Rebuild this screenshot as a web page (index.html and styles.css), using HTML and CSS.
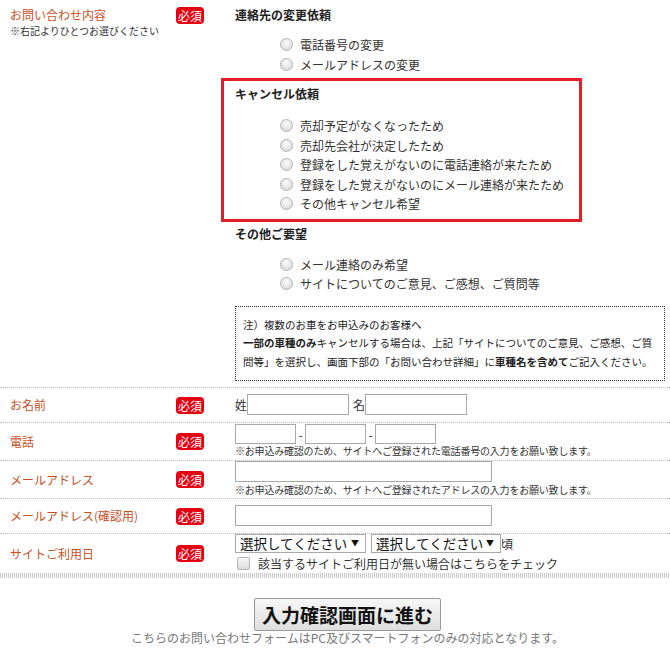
FILE: index.html
```html
<!DOCTYPE html>
<html lang="ja">
<head>
    <meta charset="UTF-8">
    <meta name="viewport" content="width=device-width, initial-scale=1.0">
    <title>お問い合わせ</title>
    <link rel="stylesheet" href="styles.css">
</head>
<body>
    <form class="contact-form">
        <div class="form-row">
            <div class="form-label form-label-top">
                <div class="label-text">お問い合わせ内容<small>※右記よりひとつお選びください</small></div>
                <span class="required">必須</span>
            </div>
            <div class="form-field field-inquiry">
                <p class="group-title">連絡先の変更依頼</p>
                <ul class="option-list">
                    <li><label><input type="radio" name="inquiry">電話番号の変更</label></li>
                    <li><label><input type="radio" name="inquiry">メールアドレスの変更</label></li>
                </ul>

                <div class="cancel-box">
                    <p class="group-title">キャンセル依頼</p>
                    <ul class="option-list cancel-list">
                        <li><label><input type="radio" name="inquiry">売却予定がなくなったため</label></li>
                        <li><label><input type="radio" name="inquiry">売却先会社が決定したため</label></li>
                        <li><label><input type="radio" name="inquiry">登録をした覚えがないのに電話連絡が来たため</label></li>
                        <li><label><input type="radio" name="inquiry">登録をした覚えがないのにメール連絡が来たため</label></li>
                        <li><label><input type="radio" name="inquiry">その他キャンセル希望</label></li>
                    </ul>
                </div>

                <p class="group-title other-title">その他ご要望</p>
                <ul class="option-list other-list">
                    <li><label><input type="radio" name="inquiry">メール連絡のみ希望</label></li>
                    <li><label><input type="radio" name="inquiry">サイトについてのご意見、ご感想、ご質問等</label></li>
                </ul>

                <div class="notice">
                    <p>注）複数のお車をお申込みのお客様へ</p>
                    <p><b>一部の車種のみ</b>キャンセルする場合は、上記「サイトについてのご意見、ご感想、ご質問等」を選択し、画面下部の「お問い合わせ詳細」に<b>車種名を含めて</b>ご記入ください。</p>
                </div>
            </div>
        </div>

        <div class="form-row">
            <div class="form-label">
                <div class="label-text">お名前</div>
                <span class="required">必須</span>
            </div>
            <div class="form-field field-name">
                <span>姓</span><input type="text" class="input-name">
                <span class="name-gap">名</span><input type="text" class="input-name">
            </div>
        </div>

        <div class="form-row">
            <div class="form-label">
                <div class="label-text">電話</div>
                <span class="required">必須</span>
            </div>
            <div class="form-field field-tel">
                <div>
                    <input type="text" class="input-tel"><span class="dash">-</span><input type="text" class="input-tel"><span class="dash">-</span><input type="text" class="input-tel">
                </div>
                <p class="field-note">※お申込み確認のため、サイトへご登録された電話番号の入力をお願い致します。</p>
            </div>
        </div>

        <div class="form-row">
            <div class="form-label">
                <div class="label-text">メールアドレス</div>
                <span class="required">必須</span>
            </div>
            <div class="form-field field-mail">
                <input type="text" class="input-mail">
                <p class="field-note">※お申込み確認のため、サイトへご登録されたアドレスの入力をお願い致します。</p>
            </div>
        </div>

        <div class="form-row">
            <div class="form-label">
                <div class="label-text">メールアドレス(確認用)</div>
                <span class="required">必須</span>
            </div>
            <div class="form-field field-mail-confirm">
                <input type="text" class="input-mail">
            </div>
        </div>

        <div class="form-row form-row-last">
            <div class="form-label">
                <div class="label-text">サイトご利用日</div>
                <span class="required">必須</span>
            </div>
            <div class="form-field field-date">
                <div class="date-selects">
                    <span class="select-wrap"><select><option>選択してください</option></select></span>
                    <span class="select-wrap select-second"><select><option>選択してください</option></select></span>
                    <span class="date-suffix">頃</span>
                </div>
                <label class="check-line"><input type="checkbox">該当するサイトご利用日が無い場合はこちらをチェック</label>
            </div>
        </div>
        <div class="form-end"></div>

        <div class="submit-area">
            <button type="button" class="submit-button">入力確認画面に進む</button>
            <p class="submit-note">こちらのお問い合わせフォームはPC及びスマートフォンのみの対応となります。</p>
        </div>
    </form>
</body>
</html>
```

FILE: styles.css
```css
body {
    margin: 0;
    padding: 0;
    font-family: "Noto Sans CJK JP", "Liberation Sans", sans-serif;
    font-size: 12px;
    color: #333;
    background-color: #fff;
}

p {
    margin: 0;
}

.form-row {
    display: grid;
    grid-template-columns: 235px 1fr;
    border-bottom: 1px dotted #bdbdbd;
}

.form-row-last {
    border-bottom: none;
}

.form-label {
    display: flex;
    align-items: center;
    padding-left: 10px;
}

.form-label-top {
    align-items: flex-start;
    padding-top: 6px;
}

.label-text {
    width: 166px;
    color: #c8501e;
    font-size: 12px;
    line-height: 18px;
}

.label-text small {
    display: block;
    color: #333;
    font-size: 10px;
    line-height: 14px;
}

.required {
    display: inline-block;
    width: 28px;
    height: 17px;
    line-height: 17px;
    text-align: center;
    background-color: #e50012;
    color: #fff;
    font-size: 12px;
    border-radius: 4px;
}

.form-label-top .required {
    margin-top: 1px;
}

.form-field {
    padding-right: 5px;
}

/* inquiry */
.field-inquiry {
    padding-top: 5px;
    padding-bottom: 6px;
}

.group-title {
    font-weight: bold;
    color: #222;
    line-height: 20px;
}

.option-list {
    list-style: none;
    margin: 10px 0 0;
    padding: 0 0 0 45px;
}

.option-list li {
    line-height: 19.5px;
}

.option-list label {
    display: flex;
    align-items: center;
}

input[type="radio"] {
    appearance: none;
    -webkit-appearance: none;
    width: 13px;
    height: 13px;
    margin: 0 7px 0 0;
    border: 1px solid #b4b4b4;
    border-radius: 50%;
    background: radial-gradient(circle at 50% 35%, #fbfbfb 0, #e6e6e6 55%, #d2d2d2 100%);
}

.cancel-box {
    box-sizing: border-box;
    width: 361px;
    margin: 4px 0 0 -14px;
    padding: 3px 11px 5px;
    border: 3px solid #e31e2b;
}

.cancel-list {
    margin-top: 12px;
}

.other-title {
    margin-top: 2px;
}

.other-list {
    margin-top: 11px;
}

.notice {
    margin-top: 12px;
    padding: 9px 7px;
    border: 1px dotted #333;
    font-size: 10.5px;
    line-height: 18.5px;
    color: #222;
}

/* text inputs */
input[type="text"] {
    box-sizing: border-box;
    height: 21px;
    margin: 0;
    padding: 0 3px;
    border: 1px solid #a9a9a9;
    font-family: inherit;
    vertical-align: middle;
}

.field-name {
    padding: 6px 0 7px;
    display: flex;
    align-items: center;
}

.input-name {
    width: 102px;
}

.name-gap {
    margin-left: 4px;
}

.field-tel {
    padding: 1px 0 2px;
}

.field-tel > div {
    display: flex;
    align-items: center;
}

.input-tel {
    width: 61px;
}

input.input-tel {
    height: 20px;
}

.dash {
    width: 9px;
    text-align: center;
}

.field-note {
    font-size: 10px;
    line-height: 14px;
    color: #333;
    letter-spacing: -0.2px;
}

.field-mail {
    padding: 0 0 1px;
}

.field-mail .field-note {
    margin-top: 1px;
}

.input-mail {
    width: 257px;
}

.field-mail-confirm {
    padding: 6px 0 7px;
}

/* date */
.date-selects {
    display: flex;
    align-items: center;
    height: 19px;
}

.select-wrap {
    position: relative;
    display: inline-block;
}

.select-wrap::after {
    content: "▼";
    position: absolute;
    right: 7px;
    top: 3px;
    font-size: 8px;
    line-height: 12px;
    color: #111;
    pointer-events: none;
}

.select-wrap select {
    appearance: none;
    -webkit-appearance: none;
    box-sizing: border-box;
    width: 131px;
    height: 19px;
    margin: 0;
    padding: 0 0 0 4px;
    border: 1px solid #a9a9a9;
    border-radius: 0;
    background-color: #fff;
    font-family: inherit;
    font-size: 13.5px;
    line-height: 17px;
    color: #111;
}

.select-second {
    margin-left: 5px;
}

.select-second select {
    width: 130px;
}

.date-suffix {
    line-height: 19px;
}

.check-line {
    display: flex;
    align-items: center;
    height: 20px;
    padding-left: 2px;
}

input[type="checkbox"] {
    appearance: none;
    -webkit-appearance: none;
    width: 13px;
    height: 13px;
    margin: 0 8px 0 0;
    border: 1px solid #b4b4b4;
    border-radius: 2px;
    background: linear-gradient(#f8f8f8, #dcdcdc);
}

.form-end {
    height: 5px;
    background: repeating-linear-gradient(90deg, #c8c8c8 0, #c8c8c8 1px, #fff 1px, #fff 2px);
}

/* submit */
.submit-area {
    padding: 20px 0 0 25px;
    text-align: center;
}

.submit-button {
    height: 33px;
    padding: 0 7px;
    border: 1px solid #9a9a9a;
    border-radius: 2px;
    background: linear-gradient(#f7f7f7, #dedede);
    font-family: inherit;
    font-size: 19px;
    font-weight: bold;
    color: #111;
    cursor: pointer;
}

.submit-note {
    font-size: 12px;
    line-height: 14px;
    color: #777;
}
```
